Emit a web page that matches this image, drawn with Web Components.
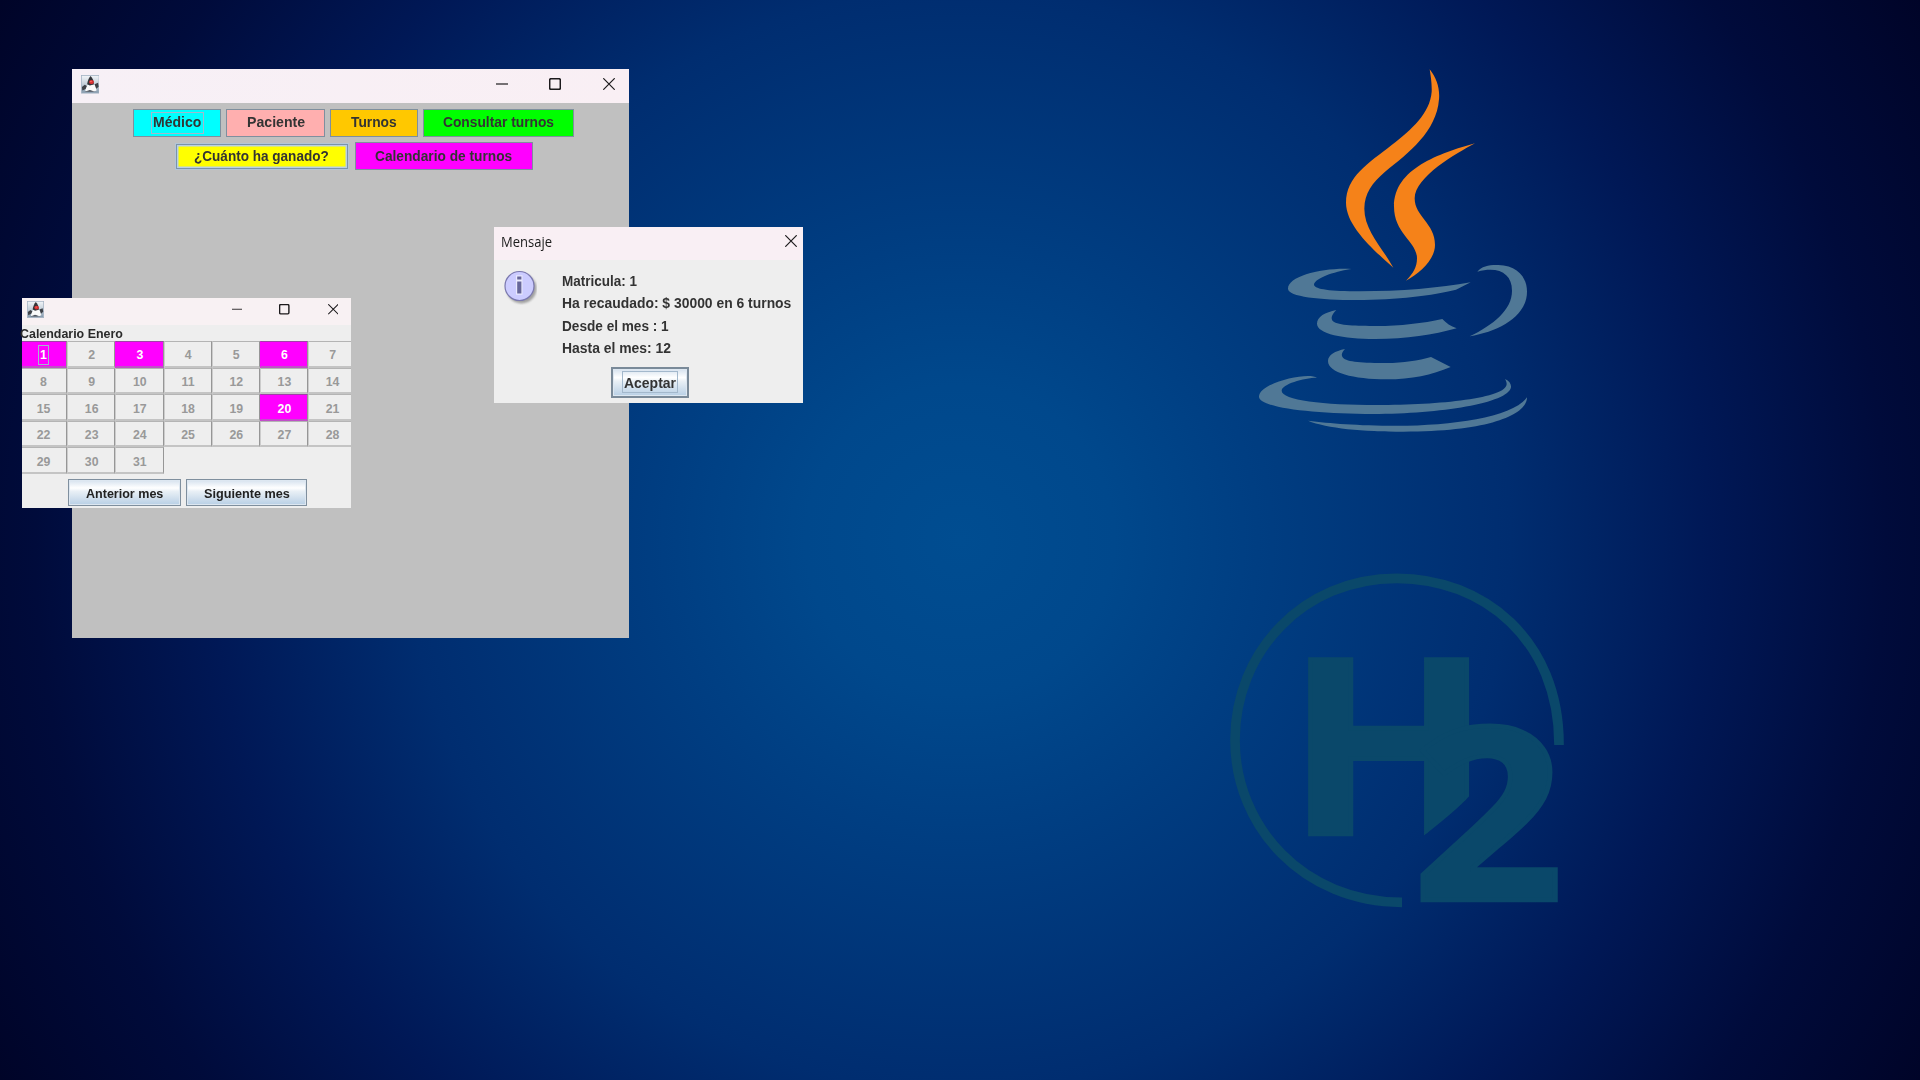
<!DOCTYPE html>
<html lang="es">
<head>
<meta charset="utf-8">
<title>Turnos</title>
<style>
html,body{margin:0;height:100%;overflow:hidden}
body{font-family:"Liberation Sans",Arial,sans-serif;background:#000428}
</style>
</head>
<body>
<desk-top></desk-top>
<script>
const define = (name, html, ready) => customElements.define(name, class extends HTMLElement {
  connectedCallback() {
    if (this.shadowRoot) return;
    const root = this.attachShadow({ mode: 'open' });
    root.innerHTML = typeof html === 'function' ? html(this) : html;
    if (ready) ready(this, root);
  }
});

/* A label squeezed horizontally to an exact width. */
define('fit-text', el => `<style>
:host{display:block;width:${el.getAttribute('w')}px;flex:none;white-space:nowrap;line-height:1;height:1em}
span{display:inline-block;transform-origin:0 0;line-height:1;vertical-align:top}
</style><span>${el.getAttribute('t')}</span>`, (el, root) => {
  const s = root.querySelector('span');
  s.style.transform = `scaleX(${+el.getAttribute('w') / s.offsetWidth})`;
});

/* Duke icon of the Java frame */
define('duke-icon', `<style>:host{display:block;flex:none}svg{display:block;width:100%;height:100%}</style>
<svg viewBox="0 0 18 18">
<defs><linearGradient id="g" x1="0" y1="0" x2="0" y2="1"><stop offset="0" stop-color="#f2f5f8"/><stop offset=".5" stop-color="#c4cfd9"/><stop offset="1" stop-color="#8398ab"/></linearGradient></defs>
<rect x=".4" y=".4" width="17.2" height="17.2" fill="url(#g)" stroke="#a5b4c4" stroke-width=".8"/>
<path d="M4.200 15.600C4.400 12 5.800 10.500 7 9h5.500c1.600 1 2.300 3.500 2.600 6l-3 1.300-3-1.500-2.800 1.300z" fill="#fafafa"/>
<path d="M9.300 1C7.400 3 6.400 6 6 9l2.600 1.200 3.900-.9C12.700 6.200 11.300 3 9.300 1z" fill="#333438"/>
<path d="M.9 11.600l2.800-2 2 1.200-1.200 2.800-3.200 1.400zM13.200 9l3.400-1.400.6 3.800-2.400 2z" fill="#3e4147"/>
<path d="M3.500 16.400l5-1.800 5.500 1.800z" fill="#50555e"/>
<ellipse cx="10.200" cy="6.900" rx="2.400" ry="2" fill="#d82e30"/><circle cx="9.700" cy="6.400" r=".7" fill="#ff7a70"/>
</svg>`);

/* Minimise, maximise, close */
define('win-glyph', el => `<style>:host{display:block;width:12px;height:12px;flex:none}svg{display:block;width:100%;height:100%}</style>
<svg viewBox="0 0 12 12" fill="none" stroke="${el.getAttribute('c') || '#1c1a1c'}" stroke-width="${el.getAttribute('s') || 1.2}">${
  { min: '<path d="M0 6H12"/>', max: '<rect x=".7" y=".7" width="10.600" height="10.600" rx="1.200"/>', close: '<path d="M.3.3 11.700 11.700M11.700.3.3 11.700"/>' }[el.getAttribute('k')]}</svg>`);

define('swing-button', el => `<style>
:host{display:flex;align-items:center;justify-content:center;box-sizing:border-box;flex:none;background:var(--bg);border:1.300px solid #7f8f9e;color:#333;font-weight:bold;font-size:14.700px}
:host([metal]){background:linear-gradient(#d5e1ee 0,#fff 32%,#e9f0f6 45%,#b8cfe5 100%);box-shadow:inset 0 0 0 1px #dde7f1}
:host([default]){border-width:2.500px;border-color:#7a8a99}
:host([soft]){border-color:#7c93aa;box-shadow:0 0 0 1px #b3c6d8,inset 0 0 0 1.500px #b8cfe5}
.f{display:flex;align-items:center;justify-content:center}
:host([focus]) .f{outline:1px solid #a3b8cc;outline-offset:1px;height:18px}
</style><div class="f"><slot></slot></div>`);

define('main-window', `<style>
:host{display:flex;flex-direction:column;background:#c0c0c0;width:556.900px;height:569px}
.bar{display:flex;align-items:flex-start;height:33.700px;background:linear-gradient(90deg,#f7f0f6,#f9eff4);box-sizing:border-box;padding:9.300px 14px 0 8.300px;flex:none}
duke-icon{width:18.500px;height:18.500px;margin-top:-3.300px}
.sp{flex:1}.c{display:flex}
.row{display:flex;gap:5px;padding-left:60.800px;margin-top:6.300px}
.row2{gap:6px;padding-left:102.200px;margin-top:5.200px;align-items:center}
swing-button{height:28px}
.row fit-text{position:relative;top:-.5px;left:-.3px}
.row2 fit-text{top:.5px;left:-.6px}
</style>
<div class="bar"><duke-icon></duke-icon><span class="sp"></span><div class="c"><win-glyph k="min"></win-glyph><win-glyph k="max" s="1.500" style="margin-left:41px"></win-glyph><win-glyph k="close" style="margin-left:42px"></win-glyph></div></div>
<div class="row">
<swing-button focus style="--bg:#0ff;width:88px"><fit-text w="48.700" t="Médico"></fit-text></swing-button>
<swing-button style="--bg:#ffafaf;width:99px"><fit-text w="57.700" t="Paciente"></fit-text></swing-button>
<swing-button style="--bg:#ffc800;width:87.500px"><fit-text w="46" t="Turnos"></fit-text></swing-button>
<swing-button style="--bg:#0f0;width:151px"><fit-text w="110.700" t="Consultar turnos"></fit-text></swing-button>
</div>
<div class="row row2">
<swing-button soft style="--bg:#ff0;width:172px;height:25px;margin-left:1px"><fit-text w="134.700" t="¿Cuánto ha ganado?"></fit-text></swing-button>
<swing-button style="--bg:#f0f;width:178px;margin-left:1.500px"><fit-text w="137.300" t="Calendario de turnos"></fit-text></swing-button>
</div>`);

define('message-dialog', `<style>
:host{display:flex;flex-direction:column;background:#eee;width:309px;height:176px}
.bar{display:flex;justify-content:space-between;height:32.500px;background:#f9eff4;box-sizing:border-box;padding:8px 6px 0 7px;font:13.800px/1 "Open Sans",sans-serif;color:#1b1b1b;flex:none}
.bar fit-text{height:18px}
.bd{display:flex;height:107.500px;flex:none}
.ic{width:34px;height:36px;margin:9.500px 0 0 9px;flex:none}
.tx{display:flex;flex-direction:column;gap:7.700px;margin:14.700px 0 0 25px;font-weight:bold;font-size:14.500px;color:#333}
swing-button{width:78.500px;height:30.500px;margin-left:116.500px}
swing-button fit-text{position:relative;top:1px}
</style>
<div class="bar"><fit-text w="51" t="Mensaje"></fit-text><win-glyph k="close"></win-glyph></div>
<div class="bd">
<svg class="ic" viewBox="0 0 34 36"><defs><filter id="b" x="-20%" y="-20%" width="150%" height="150%"><feGaussianBlur stdDeviation="1.300"/></filter></defs>
<circle cx="18.500" cy="19.500" r="15" fill="#777" opacity=".65" filter="url(#b)"/><circle cx="16.500" cy="17" r="14.500" fill="#ccf" stroke="#7a78ae" stroke-width="1.200"/>
<path d="M13 6.300h6.500v19.400h-6.500z" fill="#e9e9fc"/><rect x="14.200" y="7.500" width="4.200" height="3" fill="#669"/><rect x="14.200" y="12.500" width="4.200" height="12" fill="#669"/></svg>
<div class="tx"><fit-text w="75.300" t="Matricula: 1"></fit-text><fit-text w="229" t="Ha recaudado: $ 30000 en 6 turnos"></fit-text><fit-text w="107" t="Desde el mes : 1"></fit-text><fit-text w="109.300" t="Hasta el mes: 12"></fit-text></div>
</div>
<swing-button metal default focus><fit-text w="52.300" t="Aceptar"></fit-text></swing-button>`);

define('day-cell', el => `<style>
:host{display:flex;align-items:center;justify-content:center;box-sizing:border-box;width:48.200px;height:26.600px;flex:none;font-weight:bold;font-size:12.300px;color:#999;border-right:1.500px solid #969696;border-bottom:2px solid #c4c4c4;border-left:1px solid #ccc;border-top:1px solid #b4b4b4}
:host([on]){background:#f0f;color:#fff;border-top-color:#a040a8;border-bottom-color:#c050c8;border-left-color:#f0f}
span{line-height:1;position:relative;top:1.800px;left:.3px}
:host([focus]) span{outline:1px solid #a3b8cc;padding:2px 0;outline-offset:1px;top:1.300px}
</style><span>${el.getAttribute('n')}</span>`);

define('calendar-window', () => {
  const on = [1, 3, 6, 20];
  let days = '';
  for (let d = 1; d <= 31; d++) days += `<day-cell n="${d}"${on.includes(d) ? ' on' : ''}${d === 1 ? ' focus' : ''}></day-cell>`;
  return `<style>
:host{display:flex;flex-direction:column;background:#eee;width:328.600px;height:210px}
.bar{display:flex;height:27px;background:#f8f1f3;box-sizing:border-box;padding:3px 12.500px 0 5.300px;flex:none}
duke-icon{width:17px;height:17px}
.sp{flex:1}
.c{display:flex;padding-top:3px}
win-glyph{width:10.500px;height:10.500px}
.t{height:16px;font-weight:bold;font-size:12px;color:#2b2b2b;margin-left:-2px;padding-top:3px;box-sizing:border-box;flex:none}
.clip{overflow:hidden;flex:none;height:133.300px}
.grid{display:flex;flex-wrap:wrap;width:337.600px;margin-left:-2.900px}
.nav{display:flex;gap:5px;margin:4.700px 0 0 46px}
.nav fit-text{position:relative;top:1.600px;left:.4px}
swing-button{height:27px;font-size:12px;color:#222}
</style>
<div class="bar"><duke-icon></duke-icon><span class="sp"></span><div class="c"><win-glyph k="min" s="1"></win-glyph><win-glyph k="max" s="1.600" style="margin-left:37px"></win-glyph><win-glyph k="close" style="margin-left:38px"></win-glyph></div></div>
<div class="t"><fit-text w="102.500" t="Calendario Enero"></fit-text></div>
<div class="clip"><div class="grid">${days}</div></div>
<div class="nav"><swing-button metal style="width:113px"><fit-text w="77.300" t="Anterior mes"></fit-text></swing-button><swing-button metal style="width:120.500px"><fit-text w="85.500" t="Siguiente mes"></fit-text></swing-button></div>`;
});

define('java-logo', `<style>:host{display:block;width:300px;height:380px}svg{display:block}</style>
<svg width="300" height="380" viewBox="0 0 900 1140">
<g fill="#f58219">
<path d="M569 28C590 55 600 85 597 118C590 215 505 280 437 334C395 370 374 400 373 446C373 510 425 560 460 623C405 573 318 500 318 428C318 350 385 310 455 255C515 208 570 160 575 95C576 70 572 48 569 28Z"/>
<path d="M705 250C650 280 525 350 524 415C524 470 585 490 585 554C585 600 540 638 498 662C520 640 531 622 531 595C531 545 462 520 462 440C462 325 600 280 705 250Z"/>
</g>
<g fill="#507896">
<path d="M335 627C300 631 222 652 222 675C226 688 270 694 360 694C480 694 600 684 692 667L648 689C580 706 470 720 350 720C240 720 144 710 144 686C144 648 250 622 335 627Z"/>
<path d="M712 635C725 618 750 614 775 615C830 616 861 650 861 695C861 770 775 815 689 829C760 794 816 750 816 692C816 640 775 618 712 635Z"/>
<path d="M289 750C274 765 272 775 279 784C295 797 350 798 410 798C480 798 550 790 607 777C618 789 632 799 650 805C580 825 500 837 405 837C310 837 231 821 231 791C231 770 255 757 289 750Z"/>
<path d="M315 867C305 878 303 886 309 893C320 906 370 909 440 909C490 909 535 902 573 891L632 921C575 945 515 958 440 958C340 958 264 938 264 903C264 885 285 873 315 867Z"/>
<path d="M231 953C190 953 125 973 125 992C125 1020 250 1035 410 1035C600 1035 800 1015 800 972C800 967 798 962 795 957C808 963 814 972 813 982C805 1030 600 1062 400 1062C220 1062 57 1043 57 1010C57 970 200 935 231 953Z"/>
<path d="M204 1082C270 1090 350 1097 470 1097C640 1097 820 1070 861 1012C862 1060 760 1115 490 1115C370 1115 260 1105 204 1082Z"/>
</g></svg>`);

/* The clip cuts the foot of the H along the diagonal of the 2. */
define('h-two-logo', `<style>:host{display:block;width:360px;height:360px}svg{display:block}text{font-family:"Open Sans",sans-serif;font-weight:700}</style>
<svg width="360" height="360" viewBox="0 0 1080 1080" fill="#0a486a">
<defs><clipPath id="h"><path d="M0 0H760V710H746Q710 750 607 830H0z"/></clipPath></defs>
<path d="M1017 555C1018 240 790 55 530 55C250 55 45 275 45 540C45 800 250 1027 546 1027" fill="none" stroke="#0a486a" stroke-width="29"/>
<g stroke="#0a486a" stroke-width="13">
<g clip-path="url(#h)"><text transform="scale(1.090 1)" font-size="735" x="183" y="823">H</text></g>
<text transform="scale(1.103 1)" font-size="722" x="523" y="1020">2</text>
</g>
</svg>`);

define('desk-top', `<style>
:host{display:block;position:relative;width:1920px;height:1080px;overflow:hidden;background:radial-gradient(circle farthest-corner at 50% 50%,#004d91 0%,#00488c 14%,#003e82 27%,#002d70 50%,#001856 68%,#000b3b 84%,#000428 100%)}
:host>*{position:absolute}
main-window{left:72.400px;top:69px}
message-dialog{left:494.300px;top:227px}
calendar-window{left:22px;top:298px}
java-logo{left:1240px;top:60px}
h-two-logo{left:1220px;top:560px}
</style>
<main-window></main-window><message-dialog></message-dialog><calendar-window></calendar-window><java-logo></java-logo><h-two-logo></h-two-logo>`);
</script>
</body>
</html>
